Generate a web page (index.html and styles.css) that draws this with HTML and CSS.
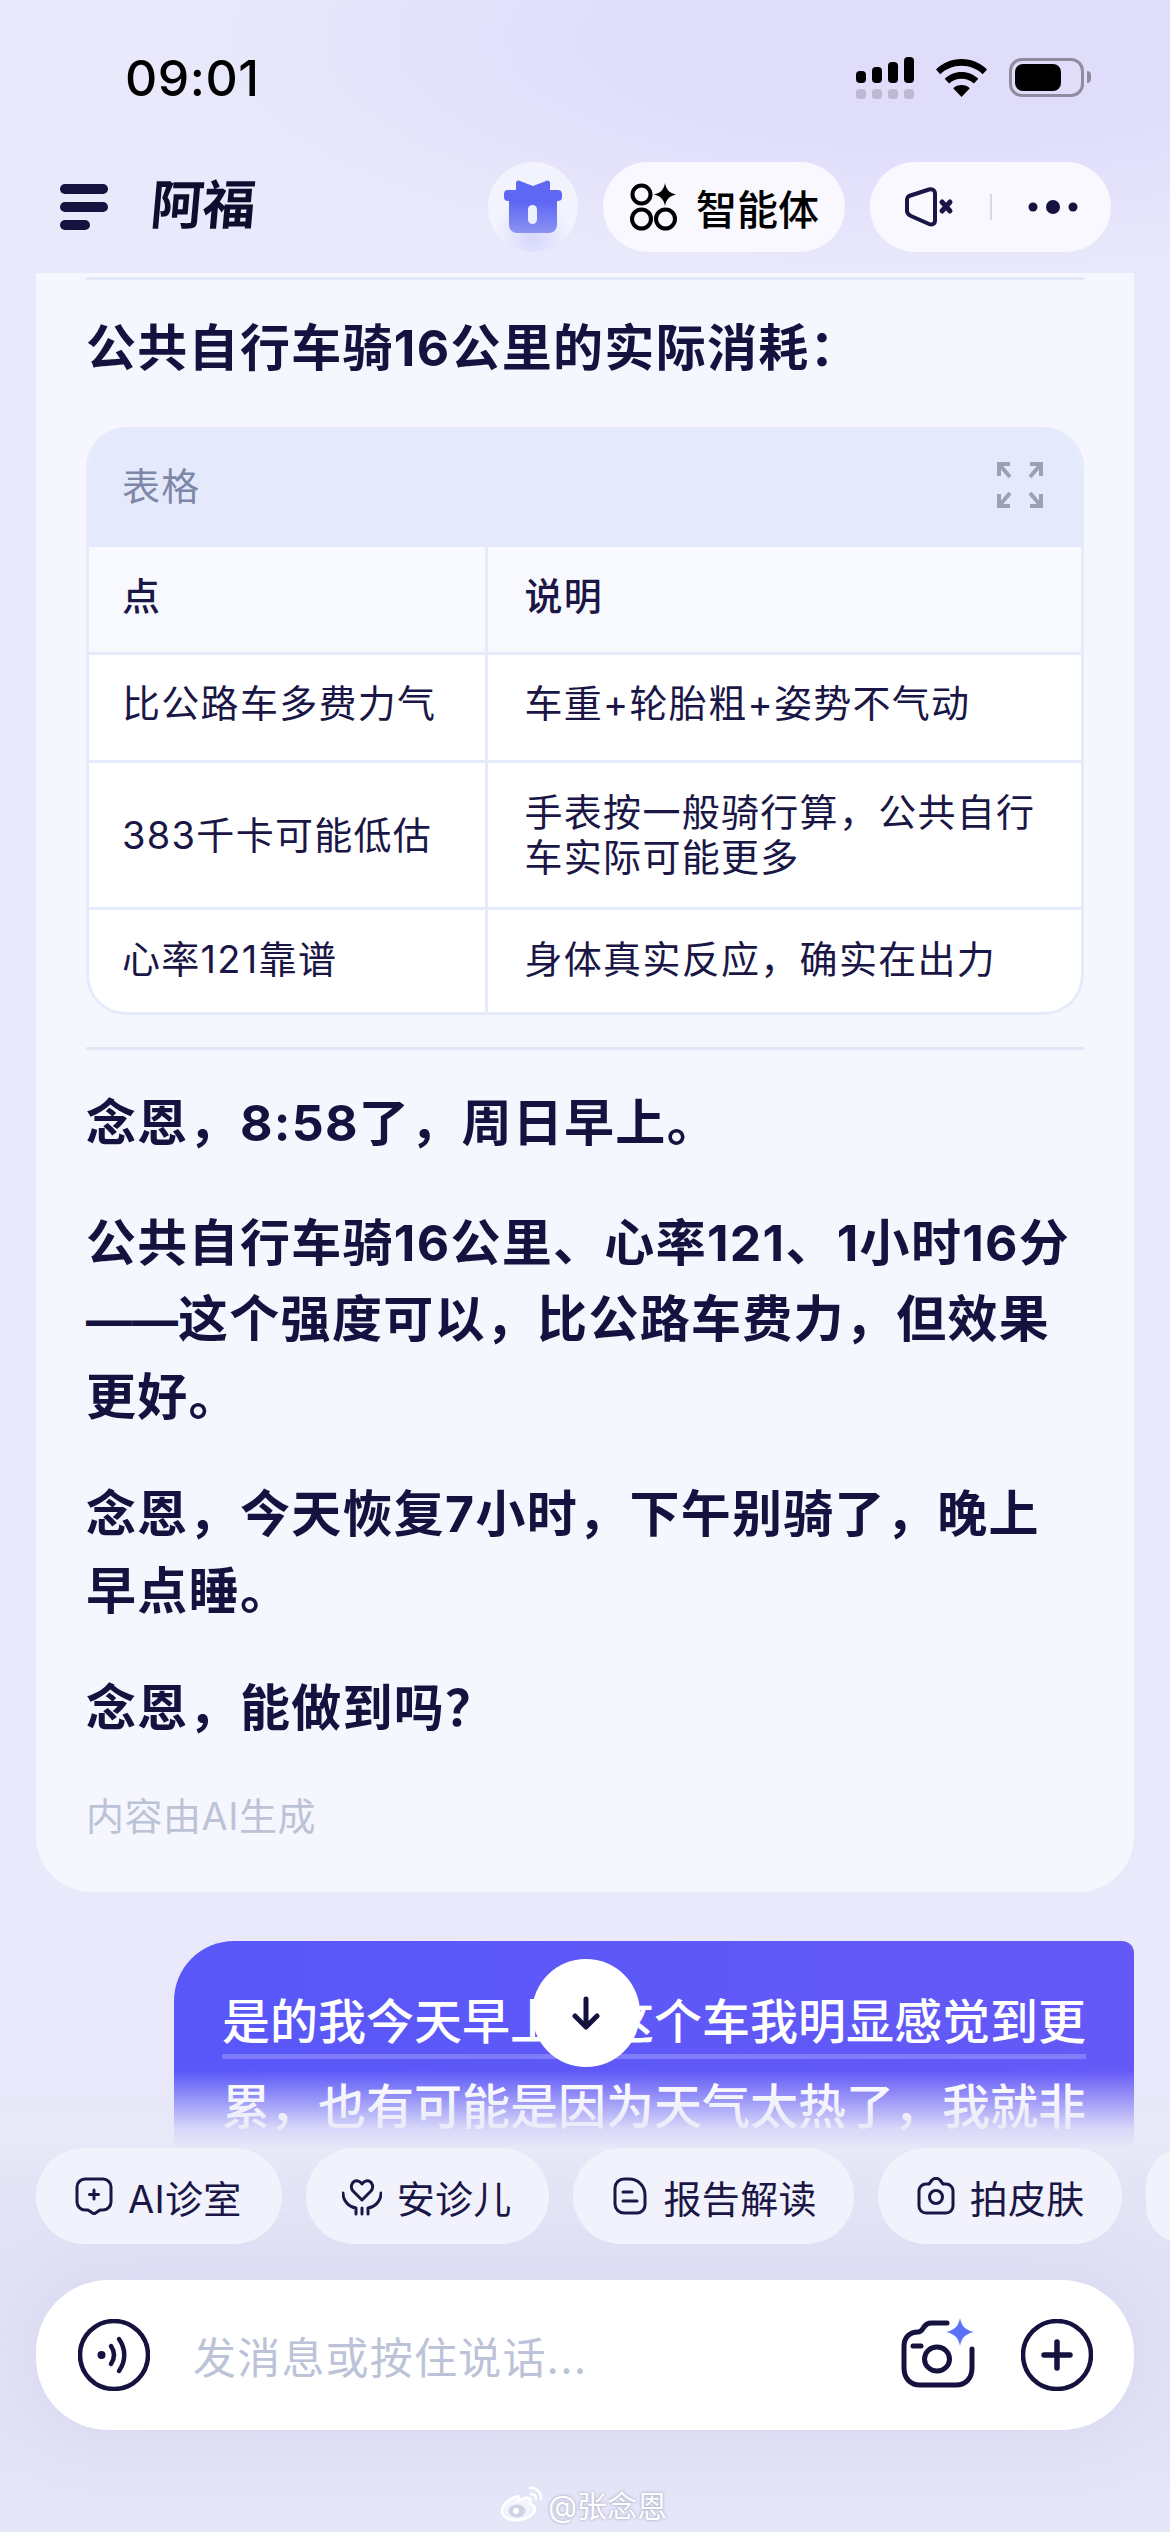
FILE: index.html
```html
<!DOCTYPE html>
<html lang="zh">
<head>
<meta charset="utf-8">
<title>阿福</title>
<link rel="stylesheet" href="styles.css">
</head>
<body>
<div class="phone">
  <div class="status">
    <span class="time">09:01</span>
    <div class="status-icons">
      <svg class="ic-signal" width="58" height="42" viewBox="0 0 58 42"><g fill="#000"><rect x="0" y="14" width="10" height="12" rx="4"/><rect x="16" y="10" width="10" height="16" rx="4"/><rect x="32" y="5" width="10" height="21" rx="4"/><rect x="48" y="0" width="10" height="26" rx="4"/></g><g fill="#bdb9d2"><rect x="0" y="32" width="10" height="10" rx="3.5"/><rect x="16" y="32" width="10" height="10" rx="3.5"/><rect x="32" y="32" width="10" height="10" rx="3.5"/><rect x="48" y="32" width="10" height="10" rx="3.5"/></g></svg>
      <svg class="ic-wifi" width="51" height="38" viewBox="0 0 51 38"><path fill="#000" d="M25.500 0C15.500 0 6.800 3.800 0 10.500l4.300 4.800C10 9.800 17.300 6.800 25.500 6.800s15.500 3 21.200 8.500l4.300-4.800C44.200 3.800 35.500 0 25.500 0Z M25.500 13c-6.500 0-12.300 2.500-16.800 6.700l4.400 4.800c3.300-3 7.600-4.800 12.400-4.800s9.100 1.800 12.400 4.800l4.400-4.800C37.800 15.500 32 13 25.500 13Z M25.500 26c-3.200 0-6.100 1.200-8.300 3.200L25.500 38l8.300-8.800c-2.200-2-5.100-3.200-8.300-3.200Z"/></svg>
      <div class="battery"><div class="battery-level"></div></div>
      <div class="battery-nub"></div>
    </div>
  </div>

  <header class="topbar">
    <svg class="ic-menu" width="48" height="46" viewBox="0 0 48 46"><g fill="#15123f"><rect width="48" height="10" rx="5"/><rect y="18" width="48" height="10" rx="5"/><rect y="36" width="30" height="10" rx="5"/></g></svg>
    <span class="logo">阿福</span>
    <div class="gift">
      <svg width="58" height="54" viewBox="0 0 58 54"><defs><linearGradient id="giftg" x1="0" y1="0" x2="0" y2="1"><stop offset="0" stop-color="#5a62f4"/><stop offset="1" stop-color="#8c93f3"/></linearGradient></defs><path fill="#5f68f5" d="M12 3c0-2 2-3 4-2l13 5 13-5c2-1 4 0 4 2v9H12Z"/><path fill="url(#giftg)" d="M5 19h48v26a8 8 0 0 1-8 8H13a8 8 0 0 1-8-8Z"/><rect y="10" width="58" height="11" rx="4" fill="#5f68f5"/><rect x="24" y="25" width="9" height="19" rx="4.500" fill="#eef0ff"/></svg>
    </div>
    <div class="pill pill-agent">
      <svg width="47" height="48" viewBox="0 0 47 48"><g fill="none" stroke="#000" stroke-width="4"><circle cx="11.500" cy="11.500" r="9"/><circle cx="11.500" cy="36" r="9.500"/><circle cx="35.500" cy="36" r="9.500"/></g><path fill="#000" d="M35 0c1 6.500 4.500 10 11 11.500-6.500 1.500-10 5-11 11.500-1-6.500-4.500-10-11-11.500C30.500 10 34 6.500 35 0Z"/></svg>
      <span>智能体</span>
    </div>
    <div class="pill pill-sound">
      <svg class="ic-speaker" width="49" height="40" viewBox="0 0 49 40"><path fill="none" stroke="#1a1646" stroke-width="4" stroke-linejoin="round" d="M2 12c0-1 .5-2 2-3L24 2.500c3-.8 6 .5 6 4v27c0 3.500-3 4.800-6 3.500L6 29c-3-1.500-4-3-4-5Z"/><path stroke="#1a1646" stroke-width="5" stroke-linecap="round" d="M37 15l8 9M45 15l-8 9"/></svg>
      <span class="pill-divider"></span>
      <svg width="50" height="14" viewBox="0 0 50 14"><g fill="#15123f"><circle cx="5" cy="7" r="4.500"/><circle cx="25" cy="7" r="7"/><circle cx="45" cy="7" r="4.500"/></g></svg>
    </div>
  </header>

  <main class="scroller">
    <article class="card">
      <div class="rule rule-top"></div>
      <h2 class="card-title">公共自行车骑16公里的实际消耗：</h2>
      <section class="table-box">
        <div class="table-head">
          <span>表格</span>
          <svg width="46" height="46" viewBox="0 0 46 46"><g fill="none" stroke="#9ba0b2" stroke-width="4"><path d="M2 14V2h11M2 2l11 13"/><path d="M44 14V2H33M44 2L33 15"/><path d="M2 32v12h11M2 44l11-13"/><path d="M44 32v12H33M44 44L33 31"/></g></svg>
        </div>
        <table class="tbl">
          <tr class="tbl-header"><th>点</th><th>说明</th></tr>
          <tr><td>比公路车多费力气</td><td>车重+轮胎粗+姿势不气动</td></tr>
          <tr><td>383千卡可能低估</td><td>手表按一般骑行算，公共自行<br>车实际可能更多</td></tr>
          <tr><td>心率121靠谱</td><td>身体真实反应，确实在出力</td></tr>
        </table>
      </section>
      <div class="rule rule-mid"></div>
      <p class="para">念恩，8:58了，周日早上。</p>
      <p class="para">公共自行车骑16公里、心率121、1小时16分<br><span class="dash">——</span>这个强度可以，比公路车费力，但效果<br>更好。</p>
      <p class="para">念恩，今天恢复7小时，下午别骑了，晚上<br>早点睡。</p>
      <p class="para">念恩，能做到吗？</p>
      <p class="ai-note">内容由AI生成</p>
    </article>
    <div class="bubble">
      <span class="bubble-line">是的我今天早上骑这个车我明显感觉到更</span><br>
      累，也有可能是因为天气太热了，我就非
    </div>
  </main>

  <button class="scroll-down" type="button" aria-label="向下">
    <svg width="28" height="34" viewBox="0 0 28 34"><path fill="none" stroke="#15123f" stroke-width="5" stroke-linecap="round" stroke-linejoin="round" d="M14 3v27M3 20l11 11 11-11"/></svg>
  </button>

  <div class="dock">
    <div class="chips">
      <div class="chip chip-ai">
        <svg width="38" height="38" viewBox="0 0 38 38"><path fill="none" stroke="#1a1646" stroke-width="3" stroke-linejoin="round" d="M10 2h18a8 8 0 0 1 8 8v15a8 8 0 0 1-8 8h-3l-6 4-6-4h-3a8 8 0 0 1-8-8V10a8 8 0 0 1 8-8Z"/><path stroke="#1a1646" stroke-width="3" stroke-linecap="round" d="M19 13v9M14.500 17.500h9"/></svg>
        <span>AI诊室</span>
      </div>
      <div class="chip chip-safe">
        <svg width="40" height="40" viewBox="0 0 40 40"><g fill="none" stroke="#1a1646" stroke-width="3" stroke-linecap="round" stroke-linejoin="round"><path d="M20 24L11 15c-4-5 0-11 5-10 2 .3 3 1.500 4 3 1-1.500 2-2.700 4-3 5-1 9 5 5 10Z"/><path d="M1 17c0 8 6 14 13 15v6M39 17c0 8-6 14-13 15v6"/><path d="M20 32v6"/></g></svg>
        <span>安诊儿</span>
      </div>
      <div class="chip chip-report">
        <svg width="34" height="38" viewBox="0 0 34 38"><path fill="none" stroke="#1a1646" stroke-width="3" d="M11 2h5c9 0 16 7 16 16v10a8 8 0 0 1-8 8H11a9 9 0 0 1-9-9V11a9 9 0 0 1 9-9Z"/><path stroke="#1a1646" stroke-width="3" stroke-linecap="round" d="M10 15h9M10 24h14"/></svg>
        <span>报告解读</span>
      </div>
      <div class="chip">
        <svg width="38" height="38" viewBox="0 0 38 38"><path fill="none" stroke="#1a1646" stroke-width="3" stroke-linejoin="round" d="M12 7l3-4c1-1 2-1.500 3-1.500h2c1 0 2 .5 3 1.500l3 4h3a7 7 0 0 1 7 7v15a7 7 0 0 1-7 7H9a7 7 0 0 1-7-7V14a7 7 0 0 1 7-7Z"/><circle cx="19" cy="20" r="6.500" fill="none" stroke="#1a1646" stroke-width="3"/></svg>
        <span>拍皮肤</span>
      </div>
      <div class="chip"></div>
    </div>
    <div class="composer">
      <svg width="72" height="72" viewBox="0 0 72 72"><circle cx="36" cy="36" r="34" fill="none" stroke="#15123f" stroke-width="4.500"/><circle cx="23.500" cy="36" r="4" fill="#15123f"/><g fill="none" stroke="#15123f" stroke-width="4.500" stroke-linecap="round"><path d="M33 27c4 6 4 12 0 18"/><path d="M41 20c7 10 7 22 0 32"/></g></svg>
      <span class="placeholder">发消息或按住说话...</span>
      <svg class="ic-camera" width="74" height="70" viewBox="0 0 74 70"><g fill="none" stroke="#15123f" stroke-width="5" stroke-linecap="round" stroke-linejoin="round"><path d="M46 5H30c-3 0-5 1-7 4-2 3-3 5-6 5-8 0-14 5-14 14v22c0 10 6 17 16 17h36c10 0 16-7 16-17V31"/><path d="M12 28h8"/><ellipse cx="36" cy="41" rx="12.500" ry="12"/></g><path fill="#5c72f6" d="M59 0c1.500 8 5 12 14 14-9 2-12.500 6-14 14-1.500-8-5-12-14-14 9-2 12.500-6 14-14Z"/></svg>
      <svg class="ic-plus" width="72" height="72" viewBox="0 0 72 72"><circle cx="36" cy="36" r="34" fill="none" stroke="#15123f" stroke-width="4.500"/><path stroke="#15123f" stroke-width="5.500" stroke-linecap="round" d="M36 23v26M23 36h26"/></svg>
    </div>
    <div class="watermark">
      <svg width="44" height="36" viewBox="0 0 44 36"><g fill="none" stroke="#fff" stroke-width="2.500"><path d="M18 10C9 12 1 20 2 26c1 6 9 9 17 8 9-1 16-6 16-11 0-3-3-5-5-5 1-3 1-6-2-6-3-1-7 2-10 3 1-3 1-5-0-5Z" fill="#f3f3fd"/><path stroke-linecap="round" d="M30 2c6-1 11 4 11 11M31 8c3-.5 5 2 5 5"/></g><ellipse cx="17" cy="25" rx="8.500" ry="6.500" fill="#d0d1e4"/><circle cx="16" cy="25" r="3" fill="#fff"/></svg>
      <span>@张念恩</span>
    </div>
  </div>
</div>
</body>
</html>
```
FILE: styles.css
```css
* { box-sizing: border-box; }
html, body { margin: 0; padding: 0; }
body { font-family: Inter, "Noto Sans CJK SC", sans-serif; color: #15123f; }

.phone {
  position: relative;
  width: 1170px;
  height: 2532px;
  overflow: hidden;
  display: flex;
  flex-direction: column;
  background:
    radial-gradient(ellipse 760px 240px at 80% 40px, #e0ddfb 40%, rgba(224,221,251,0) 100%),
    #e9e9fb;
}

/* status bar */
.status { height: 162px; flex: none; display: flex; justify-content: space-between; padding: 52px 0 0 125px; }
.time { font-size: 50px; line-height: 52px; font-weight: 500; color: #000; letter-spacing: .5px; }
.status-icons { display: flex; align-items: flex-start; padding: 5px 79px 0 0; }
.ic-signal { margin: 0; }
.ic-wifi { margin: 2px 0 0 22px; }
.battery { width: 75px; height: 39px; margin: 1px 0 0 22px; border: 3px solid #8e8c9e; border-radius: 13px; padding: 3px; }
.battery-level { width: 46px; height: 27px; background: #000; border-radius: 8px; }
.battery-nub { width: 4px; height: 12px; margin: 14px 0 0 3px; background: #8e8c9e; border-radius: 0 4px 4px 0; }

/* header */
.topbar { height: 111px; flex: none; display: flex; align-items: flex-start; padding: 0 60px; }
.ic-menu { margin-top: 22px; flex: none; }
.logo { margin: 8px 0 0 43px; width: 108px; flex: none; font-size: 53px; line-height: 70px; font-weight: 700; color: #0f0d2e; transform: skewX(-5deg); letter-spacing: -1px; white-space: nowrap; }
.gift {
  width: 90px; height: 90px; margin-left: 229px; border-radius: 50%; flex: none;
  display: flex; align-items: center; justify-content: center;
  background: radial-gradient(circle at 50% 85%, #d6d8fb 0, #f3f3fd 45%);
}
.pill { height: 90px; display: flex; align-items: center; background: #f8f8fe; border-radius: 45px; flex: none; }
.pill-agent { width: 242px; margin-left: 25px; padding-left: 27px; gap: 19px; font-size: 41px; font-weight: 500; color: #000; }
.pill-sound { width: 241px; margin-left: 25px; padding-left: 35px; }
.ic-speaker { flex: none; }
.pill-divider { width: 2px; height: 26px; background: #d8d9e8; margin: 0 36px 0 36px; }

/* scrolling content */
.scroller { flex: 1; overflow: hidden; padding: 0 36px; }
.card { background: #f6f7fe; border-radius: 0 0 56px 56px; padding: 4px 50px 51px; }
.rule { height: 3px; background: #e3e8f9; }
.card-title { margin: 30px 0 40px; font-size: 50px; line-height: 77px; font-weight: 700; letter-spacing: 1.300px; color: #15123f; white-space: nowrap; }

.table-box { border-radius: 40px; overflow: hidden; background: #fff; border: 3px solid #e6ebfc; border-top: 0; }
.table-head { height: 120px; margin: 0 -3px; background: #e4e9fc; display: flex; align-items: center; justify-content: space-between; padding: 0 41px 0 36px; font-size: 38px; letter-spacing: 1.300px; color: #7f87a8; }
.table-head span { margin-bottom: 8px; }
.table-head svg { margin-bottom: 4px; }
.tbl { width: 100%; border-collapse: collapse; table-layout: fixed; font-size: 38px; line-height: 45px; letter-spacing: 1.300px; color: #1a1646; }
.tbl th, .tbl td { text-align: left; border-top: 3px solid #e6ebfc; font-weight: 400; white-space: nowrap; }
.tbl th:first-child, .tbl td:first-child { padding-left: 33px; padding-right: 10px; }
.tbl th:last-child, .tbl td:last-child { padding-left: 37px; padding-right: 10px; }
.tbl th { font-weight: 500; padding-top: 27px; padding-bottom: 33px; }
.tbl tr:nth-child(2) td { padding-top: 26px; padding-bottom: 34px; }
.tbl tr:nth-child(3) td { padding-top: 27px; padding-bottom: 27px; }
.tbl tr:nth-child(4) td { padding-top: 27px; padding-bottom: 30px; }
.tbl tr:first-child th { border-top: 0; }
.tbl th:first-child, .tbl td:first-child { width: 397px; border-right: 3px solid #e6ebfc; }
.tbl-header { background: #f8f9fe; }

.rule-mid { margin: 32px 0 35px; }
.para { margin: 0 0 41px; font-size: 50px; line-height: 76.500px; font-weight: 700; letter-spacing: 1.300px; color: #15123f; white-space: nowrap; }
.para:first-of-type { margin-bottom: 43px; }
.dash { font-size: 46px; letter-spacing: 0; }
.ai-note { margin: 44px 0 0; font-size: 38px; line-height: 50px; letter-spacing: .5px; color: #bcc3d6; }

.bubble {
  margin: 49px 0 0 138px; padding: 38px 48px 0;
  height: 300px;
  border-radius: 60px 12px 0 0;
  background: linear-gradient(90deg, #5957f8, #6459f7);
  color: #fff; font-size: 48px; font-weight: 500; line-height: 85px; white-space: nowrap;
}
.bubble-line { display: inline-block; line-height: 60px; height: 67px; border-bottom: 5px solid rgba(255,255,255,.22); }

.scroll-down {
  position: absolute; left: 532px; top: 1959px; width: 108px; height: 108px;
  border: 0; border-radius: 50%; background: #fff; padding: 0;
  display: flex; align-items: center; justify-content: center;
  z-index: 3;
}

/* bottom dock overlays the conversation */
.dock {
  position: absolute; left: 0; right: 0; top: 2060px; bottom: 0;
  padding-top: 88px;
  background: linear-gradient(180deg, rgba(232,232,250,0) 10px, rgba(230,230,248,.42) 38px, rgba(232,232,249,.88) 68px, #e8e8f8 88px, #e4e4f6 120px, #e2e2f6 200px, #e3e3f7 370px, #e6e6f9 472px);
}
.chips { position: relative; z-index: 1; display: flex; gap: 24px; padding-left: 36px; height: 96px; }
.chip {
  height: 96px; flex: none; border-radius: 48px; background: #f2f2fc;
  display: flex; align-items: center; padding: 0 37px 0 39px; gap: 15px;
  font-size: 38px; letter-spacing: .3px; color: #1a1646; white-space: nowrap;
}
.chip-ai { padding-right: 40px; }
.chip-safe { padding-left: 36px; }
.chip-report { padding-left: 40px; gap: 17px; }
.chip:last-child { width: 60px; }
.composer {
  margin: 36px 36px 0; height: 150px; border-radius: 72px; background: #fff;
  display: flex; align-items: center; padding: 0 41px 0 42px;
  box-shadow: 0 0 60px 12px #d8d8f0;
}
.placeholder { margin-left: 43px; flex: 1; font-size: 43px; letter-spacing: 1.200px; color: #bcc3d8; white-space: nowrap; }
.ic-plus { margin-left: 46px; }
.ic-camera { margin-bottom: 4px; }
.watermark {
  position: relative;
  margin-top: 52px; display: flex; align-items: center; gap: 4px; margin-left: 500px;
  font-size: 30px; color: #fff; text-shadow: 0 0 3px rgba(90,90,120,.55);
}
.watermark svg { flex: none; }
```
